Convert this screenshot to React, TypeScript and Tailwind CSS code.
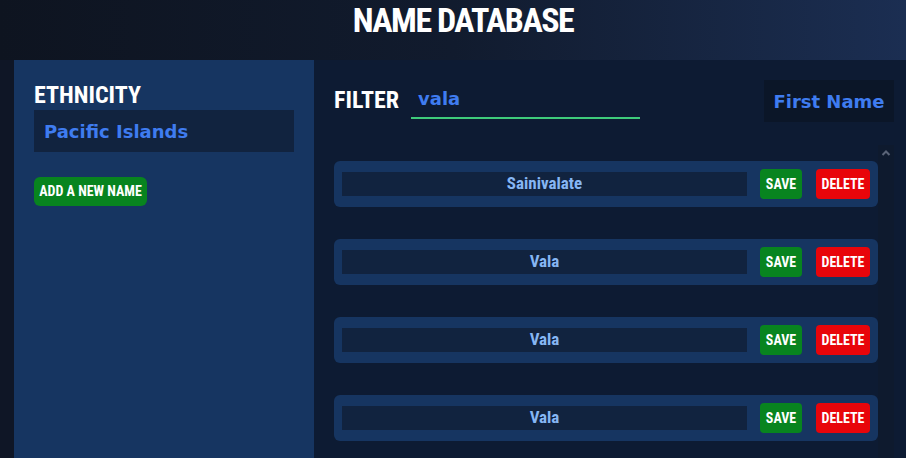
const condensed = {
  fontFamily:
    '"Roboto Condensed", "Open Sans Condensed", "Open Sans", "DejaVu Sans Condensed", sans-serif',
  fontStretch: "75%",
};

const wide = { fontFamily: '"DejaVu Sans", Verdana, sans-serif' };

const names = ["Sainivalate", "Vala", "Vala", "Vala"];

const NameRow = ({ name }: { name: string }) => (
  <div className="flex items-center h-[46px] mb-8 px-2 rounded-md bg-[#163561]">
    <div
      className="flex-1 h-6 flex items-center justify-center bg-[#11233f] text-[#86b6f4] text-[17px] font-bold"
      style={condensed}
    >
      {name}
    </div>
    <button
      className="ml-[13px] w-[42px] h-[30px] rounded bg-[#08841f] text-white text-[14px] font-bold"
      style={condensed}
    >
      SAVE
    </button>
    <button
      className="ml-[14px] w-[54px] h-[30px] rounded bg-[#e8050a] text-white text-[14px] font-bold"
      style={condensed}
    >
      DELETE
    </button>
  </div>
);

export default function App() {
  return (
    <div className="w-[906px] h-[458px] overflow-hidden bg-[#0d1b33] flex flex-col">
      <header className="h-[60px] shrink-0 pl-5 bg-gradient-to-r from-[#0e1420] via-[#111b2e] to-[#1b2e52] flex justify-center">
        <h1
          className="text-white text-[34px] font-bold leading-none pt-[3px] tracking-[-1.5px]"
          style={condensed}
        >
          NAME DATABASE
        </h1>
      </header>
      <div className="flex flex-1 min-h-0 bg-[#0d1b33]">
        <div className="w-[14px] bg-[#0f1626]" />
        <aside className="w-[300px] bg-[#163561] px-5 pt-[23px]">
          <div
            className="text-white text-[24px] font-bold leading-none"
            style={condensed}
          >
            ETHNICITY
          </div>
          <div
            className="mt-[3px] h-[42px] bg-[#11233f] flex items-center px-[10px] text-[#3f7cf0] text-[18px] font-bold"
            style={wide}
          >
            Pacific Islands
          </div>
          <button
            className="mt-[25px] h-[29px] w-[113px] rounded-md bg-[#08841f] text-white text-[14px] font-bold"
            style={condensed}
          >
            ADD A NEW NAME
          </button>
        </aside>
        <main className="flex-1 flex flex-col pl-5 pr-3">
          <div className="flex items-start pt-5 h-[85px]">
            <div
              className="w-[64px] text-white text-[24px] font-bold leading-none mt-[8px]"
              style={condensed}
            >
              FILTER
            </div>
            <div className="ml-[13px] w-[229px] h-[39px] border-b-2 border-[#3ecb7b] flex items-center px-[7px]">
              <span className="text-[#3f7cf0] text-[18px] font-bold" style={wide}>
                vala
              </span>
            </div>
            <div className="flex-1" />
            <div
              className="h-[42px] w-[130px] bg-[#0b1628] flex items-center justify-center text-[#3f7cf0] text-[18px] font-bold"
              style={wide}
            >
              First Name
            </div>
          </div>
          <div className="flex flex-1 min-h-0">
            <div className="flex-1 pt-4 overflow-hidden">
              {names.map((n, i) => (
                <NameRow key={i} name={n} />
              ))}
            </div>
            <div className="w-4 bg-[#0e1a2e] flex justify-center pt-[4px]">
              <svg width="10" height="8" viewBox="0 0 10 8">
                <path
                  d="M1.5 6 L5 2.5 L8.5 6"
                  fill="none"
                  stroke="#5a6478"
                  strokeWidth="2"
                />
              </svg>
            </div>
          </div>
        </main>
      </div>
    </div>
  );
}
